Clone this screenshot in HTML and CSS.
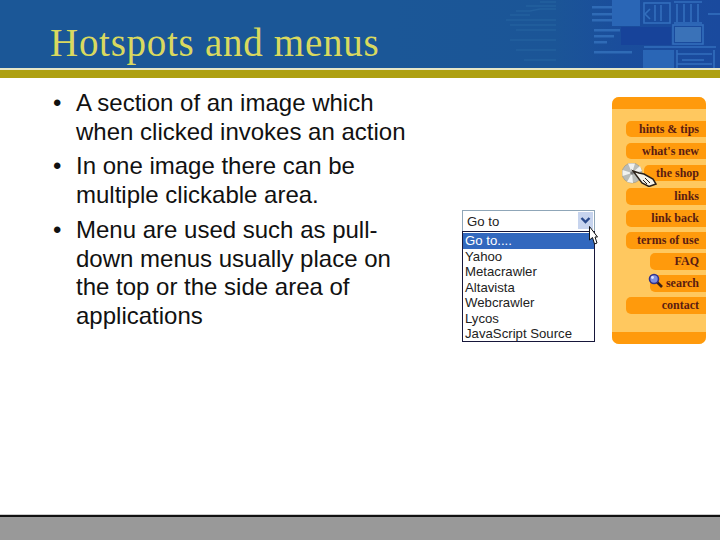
FILE: index.html
```html
<!DOCTYPE html>
<html lang="en">
<head>
<meta charset="utf-8">
<title>Hotspots and menus</title>
<link rel="stylesheet" href="styles.css">
</head>
<body>
<header class="banner">
  <svg class="circuit" viewBox="390 0 330 68" width="330" height="68" aria-hidden="true">
    <defs><linearGradient id="fade" x1="0" x2="1" y1="0" y2="0"><stop offset="0" stop-color="#1b5797"/><stop offset=".5" stop-color="#1b5597"/><stop offset=".7" stop-color="#1a4d9c"/><stop offset="1" stop-color="#1a4a9e"/></linearGradient></defs>
    <rect x="390" y="0" width="330" height="68" fill="url(#fade)"/>
    <g fill="none" stroke="#23609f" stroke-width="1.5">
      <path d="M540 2 L556 2 M526 6 L556 6 M516 11 L530 11 L540 9 L556 9 M510 15 L530 15 M506 20 L556 20 M510 25 L556 25 M516 30 L556 30 M510 40 L556 40 M516 50 L556 50 M524 60 L556 60"/>
    </g>
    <rect x="592" y="6" width="20" height="2.5" fill="#2f6bb6"/>
    <rect x="592" y="13" width="20" height="2.5" fill="#2f6bb6"/>
    <rect x="592" y="19" width="20" height="2.5" fill="#2f6bb6"/>
    <rect x="612" y="0" width="28" height="26" fill="#2a66b6"/>
    <rect x="621" y="27" width="50" height="18" fill="#17439a"/>
    <rect x="594" y="29" width="26" height="2.5" fill="#2f6bb6"/>
    <rect x="594" y="35" width="20" height="2.5" fill="#2f6bb6"/>
    <rect x="594" y="41" width="13" height="2.5" fill="#2f6bb6"/>
    <rect x="594" y="51" width="38" height="2.5" fill="#2f6bb6"/>
    <rect x="643" y="50" width="31" height="18" fill="#2a66b6"/>
    <g fill="none" stroke="#336fbd" stroke-width="1.6">
      <rect x="644" y="3" width="26" height="20"/>
      <path d="M650 9 L645 14 L650 19 M655 5 V21 M661 5 V21"/>
      <path d="M674 2 H702 M677 4 V22 M684 4 V22 M691 4 V22 M698 4 V22 M674 23 H702"/>
      <rect x="673" y="25" width="30" height="19"/>
      <path d="M644 47 H716 M677 54 H712 M682 60 H704 M677 64 H712 M677 50 V68 M714 50 V68"/>
      <path d="M708 14 H720"/>
    </g>
    <rect x="675" y="27" width="26" height="15" fill="#3a72b8"/>
  </svg>
  <h1 class="title">Hotspots and menus</h1>
</header>
<div class="rule"></div>
<main class="content">
  <ul class="points">
    <li>A section of an image which when clicked invokes an action</li>
    <li>In one image there can be multiple clickable area.</li>
    <li>Menu are used such as pull-down menus usually place on the top or the side area of applications</li>
  </ul>
  <div class="dropdown">
    <div class="select">
      <span class="select-text">Go to</span>
      <span class="select-btn">
        <svg viewBox="0 0 15 17" width="15" height="17" aria-hidden="true"><path d="M3.5 6 L7.5 10 L11.5 6" fill="none" stroke="#2a4a8c" stroke-width="2.4"/></svg>
      </span>
    </div>
    <ul class="options">
      <li class="selected">Go to....</li>
      <li>Yahoo</li>
      <li>Metacrawler</li>
      <li>Altavista</li>
      <li>Webcrawler</li>
      <li>Lycos</li>
      <li>JavaScript Source</li>
    </ul>
    <svg class="cursor" viewBox="0 0 9 19" width="9" height="19" aria-hidden="true"><path d="M.5 .5 V14 L3.5 11.5 L5.5 18 L8 17 L6 11 H8.5 Z" fill="#fff" stroke="#111" stroke-width="1"/></svg>
  </div>
  <nav class="menu">
    <div class="band top"></div>
    <ul class="links">
      <li class="pill">hints &amp; tips</li>
      <li class="pill">what's new</li>
      <li class="pill mid">the shop
        <svg class="hand" viewBox="0 0 35 24" width="35" height="24" aria-hidden="true">
          <circle cx="10" cy="10" r="10" fill="#b9bcb9" stroke="#94968f" stroke-width=".6"/>
          <path d="M10 10 L6 0.5 L13 0.5 Z M10 10 L0.5 7 L0.5 13 Z M10 10 L18 3 L20 8 Z M10 10 L5 19 L11 20 Z" fill="#f1f2f0"/>
          <circle cx="10" cy="10" r="1.8" fill="#777"/>
          <path d="M11 8 L17 10 L22 11 L31 16 L34 21 L27 23.5 L20 20 Z" fill="#f4f2ea" stroke="#2a2018" stroke-width="1.5"/>
          <path d="M23 15 L28 20 M21 17 L25 21" stroke="#2a2018" stroke-width="1"/>
        </svg>
      </li>
      <li class="pill lower">links</li>
      <li class="pill">link back</li>
      <li class="pill">terms of use</li>
      <li class="pill short raised">FAQ</li>
      <li class="pill short">search
        <svg class="lens" viewBox="0 0 15 15" width="15" height="15" aria-hidden="true">
          <path d="M9 9 L14 14" stroke="#3a2018" stroke-width="2.6"/>
          <circle cx="6" cy="6" r="4.5" fill="#7f8fe0" stroke="#33338a" stroke-width="1.6"/>
          <circle cx="4.5" cy="4.5" r="1.4" fill="#dfe4ff"/>
        </svg>
      </li>
      <li class="pill">contact</li>
    </ul>
    <div class="band bottom"></div>
  </nav>
</main>
<footer class="foot"></footer>
</body>
</html>
```
FILE: styles.css
```css
* { box-sizing: border-box; }
html, body { margin: 0; padding: 0; }
body {
  width: 720px;
  height: 540px;
  display: flex;
  flex-direction: column;
  background: #fff;
  overflow: hidden;
  font-family: "Liberation Sans", Arial, sans-serif;
}
.banner {
  position: relative;
  height: 68px;
  flex: none;
  background: #1b5797;
  padding: 20px 0 0 50px;
}
.circuit { position: absolute; right: 0; top: 0; }
.title {
  position: relative;
  margin: 0;
  font: 400 39px/46px "Liberation Serif", "Times New Roman", serif;
  letter-spacing: 0.72px;
  color: #d9d95f;
}
.rule {
  height: 10px;
  flex: none;
  background: #aea012;
  border-top: 2px solid #e6e6c8;
}
.content {
  flex: 1;
  display: flex;
  align-items: flex-start;
}
.points {
  list-style: none;
  margin: 11px 0 0 53px;
  padding: 0;
  width: 362px;
  flex: none;
  font-size: 24px;
  line-height: 28.7px;
  color: #111;
}
.points li {
  position: relative;
  padding-left: 23px;
  margin-bottom: 6px;
}
.points li::before {
  content: "•";
  position: absolute;
  left: 0;
}
.dropdown {
  position: relative;
  width: 133px;
  margin: 132px 0 0 47px;
  flex: none;
  font-size: 13.2px;
  color: #222;
}
.select {
  height: 21px;
  border: 1px solid #8fa6b8;
  border-bottom: 0;
  background: #fff;
  display: flex;
  justify-content: space-between;
  padding: 1px 1px 0 4px;
}
.select-text { line-height: 19px; }
.select-btn {
  width: 15px;
  height: 17px;
  background: #c7d4ee;
  display: flex;
}
.options {
  list-style: none;
  margin: 0;
  padding: 1px 0 0;
  height: 111px;
  border: 1px solid #16163a;
  background: #fff;
}
.options li {
  height: 15.5px;
  line-height: 15.5px;
  padding-left: 2px;
}
.options .selected {
  background: #3268be;
  color: #fff;
}
.cursor { position: absolute; left: 127px; top: 16px; }
.menu {
  width: 94px;
  height: 247px;
  margin: 19px 0 0 17px;
  flex: none;
  background: #ffc85f;
  border-radius: 7px;
  display: flex;
  flex-direction: column;
  overflow: hidden;
}
.band { height: 12px; flex: none; background: #ff9a0c; }
.links {
  flex: 1;
  list-style: none;
  margin: 0;
  padding: 12px 0 0 14px;
  display: flex;
  flex-direction: column;
  gap: 5.6px;
}
.pill {
  position: relative;
  height: 16.4px;
  margin: 0;
  padding-right: 7px;
  background: #ff9a0c;
  border-radius: 5px 0 0 5px;
  text-align: right;
  font: 700 12px/16px "Liberation Serif", "Times New Roman", serif;
  color: #5a1c12;
}
.pill.mid { margin-left: 18px; }
.pill.short { margin-left: 24px; }
.pill.lower { margin-top: 1.5px; }
.pill.raised { margin-top: -1px; }
.hand { position: absolute; left: -22px; top: -2px; }
.lens { position: absolute; left: -2px; top: -2px; }
.foot {
  height: 25px;
  flex: none;
  background: #999;
  border-top: 2px solid #111;
  box-shadow: 0 -1px 0 #ccc;
}
```
